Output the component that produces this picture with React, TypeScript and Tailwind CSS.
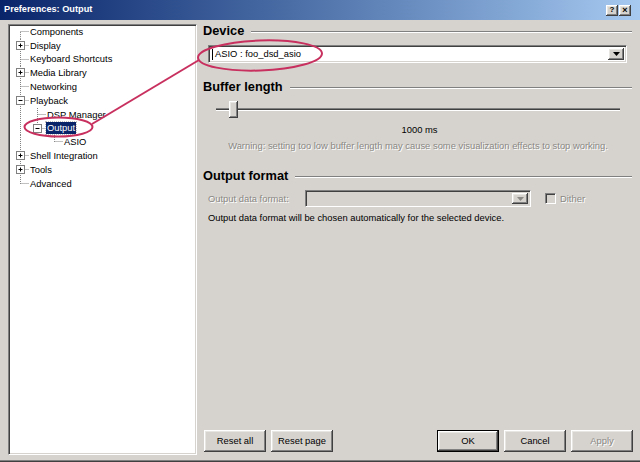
import React from 'react'

type Conn = 'first' | 'mid' | 'last'
type TreeRow = {
  label: string
  guides: boolean[]
  conn: Conn
  box?: 'plus' | 'minus'
  selected?: boolean
}

const rows: TreeRow[] = [
  { label: 'Components', guides: [], conn: 'first' },
  { label: 'Display', guides: [], conn: 'mid', box: 'plus' },
  { label: 'Keyboard Shortcuts', guides: [], conn: 'mid' },
  { label: 'Media Library', guides: [], conn: 'mid', box: 'plus' },
  { label: 'Networking', guides: [], conn: 'mid' },
  { label: 'Playback', guides: [], conn: 'mid', box: 'minus' },
  { label: 'DSP Manager', guides: [true], conn: 'mid' },
  { label: 'Output', guides: [true], conn: 'last', box: 'minus', selected: true },
  { label: 'ASIO', guides: [true, false], conn: 'last' },
  { label: 'Shell Integration', guides: [], conn: 'mid', box: 'plus' },
  { label: 'Tools', guides: [], conn: 'mid', box: 'plus' },
  { label: 'Advanced', guides: [], conn: 'last' },
]

const raised =
  'shadow-[inset_-1px_-1px_#404040,inset_1px_1px_#ffffff,inset_-2px_-2px_#808080,inset_2px_2px_#e8e6e2]'
const disabledText = 'text-[#8a8884] [text-shadow:1px_1px_0_#ffffff]'

// one indent cell of the tree: dotted lines plus optional expander box
function Glyph({ kind, conn, box }: { kind: 'pipe' | 'none' | 'conn'; conn?: Conn; box?: 'plus' | 'minus' }) {
  const dot = { stroke: '#808080', strokeWidth: 1, strokeDasharray: '1 1' }
  return (
    <svg width="17" height="13.8" viewBox="0 0 17 13.8" className="shrink-0">
      {kind === 'pipe' && <line x1="8.5" y1="0" x2="8.5" y2="13.8" {...dot} />}
      {kind === 'conn' && (
        <>
          <line x1="8.5" y1={conn === 'first' ? 6.9 : 0} x2="8.5" y2={conn === 'last' ? 6.9 : 13.8} {...dot} />
          <line x1="8.5" y1="6.5" x2="17" y2="6.5" {...dot} />
        </>
      )}
      {box && (
        <>
          <rect x="4.5" y="2.5" width="8" height="8" fill="#ffffff" stroke="#808080" strokeWidth="1" />
          <line x1="6.5" y1="6.5" x2="10.5" y2="6.5" stroke="#000" strokeWidth="1" />
          {box === 'plus' && <line x1="8.5" y1="4.5" x2="8.5" y2="8.5" stroke="#000" strokeWidth="1" />}
        </>
      )}
    </svg>
  )
}

function Tree() {
  return (
    <div className="w-[189px] shrink-0 bg-white border-t border-l border-[#808080] border-b border-r border-b-white border-r-white shadow-[inset_1px_1px_#404040,inset_-1px_-1px_#d6d3ce] pl-[3px]">
      {rows.map((r) => (
        <div key={r.label} className="flex items-center h-[13.8px]">
          {r.guides.map((g, i) => (
            <Glyph key={i} kind={g ? 'pipe' : 'none'} />
          ))}
          <Glyph kind="conn" conn={r.conn} box={r.box} />
          <span
            className={
              'px-[1px] leading-[12px] whitespace-nowrap ' +
              (r.selected ? 'bg-[#0a246a] text-white outline-1 outline-dotted outline-[#c0c0c0]' : 'text-black')
            }
          >
            {r.label}
          </span>
        </div>
      ))}
    </div>
  )
}

function GroupHeading({ title, className = '' }: { title: string; className?: string }) {
  return (
    <div className={'flex items-center h-[15px] ' + className}>
      <span className="font-bold text-[12.8px] leading-none">{title}</span>
      <div className="flex-1 ml-[7px] mr-[1px] h-[2px] border-t border-[#808080] border-b border-b-white" />
    </div>
  )
}

function Arrow({ color = '#000' }: { color?: string }) {
  return (
    <svg width="7" height="4" viewBox="0 0 7 4">
      <polygon points="0,0 7,0 3.5,4" fill={color} />
    </svg>
  )
}

function Combo({ text, disabled, className = '' }: { text?: string; disabled?: boolean; className?: string }) {
  return (
    <div
      className={
        'flex items-center border-t border-l border-[#808080] border-b border-r border-b-white border-r-white shadow-[inset_1px_1px_#404040,inset_-1px_-1px_#d6d3ce] p-[2px] ' +
        (disabled ? 'bg-[#d6d3ce] ' : 'bg-white ') +
        className
      }
    >
      <div className="flex-1 pl-[1px] leading-[12px] whitespace-nowrap">
        {text && (
          <>
            <span className="inline-block w-[1px] h-[11px] bg-black align-middle mr-[2px]" />
            {text}
          </>
        )}
      </div>
      <div className={'w-[16px] h-full bg-[#d6d3ce] flex items-center justify-center ' + raised}>
        <Arrow color={disabled ? '#8a8884' : '#000'} />
      </div>
    </div>
  )
}

function Button({ label, isDefault, disabled }: { label: string; isDefault?: boolean; disabled?: boolean }) {
  return (
    <div
      className={
        'w-[62px] h-[22px] flex items-center justify-center bg-[#d6d3ce] ' +
        (isDefault ? 'border border-black ' : '') +
        raised +
        (disabled ? ' ' + disabledText : '')
      }
    >
      {label}
    </div>
  )
}

function RightPane() {
  return (
    <div className="flex-1 flex flex-col min-w-0">
      <GroupHeading title="Device" />
      <Combo text="ASIO : foo_dsd_asio" className="mt-[6px] ml-[5px] mr-[6px] h-[18px]" />

      <GroupHeading title="Buffer length" className="mt-[17px]" />
      <div className="mt-[6px] mx-[13px] h-[17px] flex items-center">
        <div className="w-[13px] h-[3px] border-t border-[#808080] bg-[#404040] border-b border-b-white" />
        <div className={'w-[9px] h-[17px] bg-[#d6d3ce] ' + raised} />
        <div className="flex-1 h-[3px] border-t border-[#808080] bg-[#404040] border-b border-b-white" />
      </div>
      <div className="mt-[6px] text-center leading-[12px] pl-[3px]">1000 ms</div>
      <div className={'mt-[4px] text-center leading-[12px] ' + disabledText}>
        Warning: setting too low buffer length may cause some visualization effects to stop working.
      </div>

      <GroupHeading title="Output format" className="mt-[17px]" />
      <div className="mt-[6px] ml-[5px] h-[17px] flex items-center">
        <span className={'w-[97px] leading-[12px] ' + disabledText}>Output data format:</span>
        <Combo disabled className="w-[226px] h-[17px]" />
        <div className="ml-[14px] w-[11px] h-[11px] bg-[#d6d3ce] border-t border-l border-[#808080] border-b border-r border-b-white border-r-white shadow-[inset_1px_1px_#404040]" />
        <span className={'ml-[4px] leading-[12px] ' + disabledText}>Dither</span>
      </div>
      <div className="mt-[5px] ml-[5px] leading-[12px]">
        Output data format will be chosen automatically for the selected device.
      </div>

      <div className="flex-1" />
      <div className="flex items-center ml-[1px] mb-[3px] gap-[5px]">
        <Button label="Reset all" />
        <Button label="Reset page" />
        <div className="flex-1" />
        <Button label="OK" isDefault />
        <Button label="Cancel" />
        <Button label="Apply" disabled />
      </div>
    </div>
  )
}

function TitleBar() {
  return (
    <div className="h-[20px] shrink-0 flex items-center bg-linear-to-r from-[#0a246a] to-[#a6caf0] pl-[4px] pr-[9px]">
      <span className="flex-1 font-bold text-white text-[9.2px] leading-none">Preferences: Output</span>
      <div className="flex gap-[1px]">
        <div className={'w-[12px] h-[11px] bg-[#d6d3ce] flex items-center justify-center text-[8px] font-bold leading-none ' + raised}>?</div>
        <div className={'w-[12px] h-[11px] bg-[#d6d3ce] flex items-center justify-center text-[9px] font-bold leading-none ' + raised}>×</div>
      </div>
    </div>
  )
}

// hand-drawn red markup over the dialog
function Annotations() {
  return (
    <svg className="absolute inset-0 pointer-events-none" width="640" height="462" viewBox="0 0 640 462">
      <g fill="none" stroke="#c8305f" strokeWidth="2">
        <ellipse cx="260" cy="55.5" rx="62" ry="15" transform="rotate(-2 260 55.5)" />
        <ellipse cx="58.5" cy="127" rx="34" ry="9.5" />
        <line x1="92" y1="124" x2="199" y2="60" />
      </g>
    </svg>
  )
}

export default function App() {
  return (
    <div className="relative w-[640px] h-[462px] flex flex-col bg-[#d6d3ce] font-['Liberation_Sans',Arial,sans-serif] text-[9.4px] text-black overflow-hidden shadow-[inset_0_-1px_#404040,inset_0_-2px_#808080]">
      <TitleBar />
      <div className="flex-1 flex gap-[6px] pl-[8px] pr-[7px] pt-[4px] pb-[7px] min-h-0">
        <Tree />
        <RightPane />
      </div>
      <Annotations />
    </div>
  )
}
